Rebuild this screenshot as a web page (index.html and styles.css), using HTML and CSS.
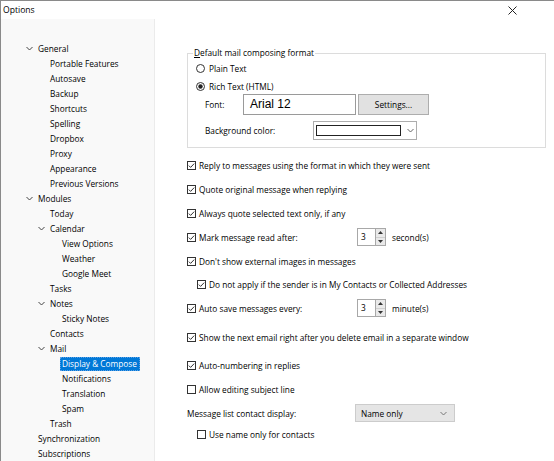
FILE: index.html
```html
<!DOCTYPE html>
<html>
<head>
<meta charset="utf-8">
<link rel="stylesheet" href="styles.css">
</head>
<body>
<div class="window">
  <div class="titlebar">
    <span class="title">Options</span>
    <svg class="close" width="9" height="9" viewBox="0 0 9 9"><path d="M0.5 0.5 L8.5 8.5 M8.5 0.5 L0.5 8.5" stroke="#222" stroke-width="1" fill="none"/></svg>
  </div>
  <div class="main">
    <div class="sidebar">
      <div class="node l0"><span class="tw"><svg width="12" height="15" viewBox="0 0 12 15"><polyline points="0.5,6 3.5,9 6.5,6" fill="none" stroke="#444"/></svg></span><span class="lbl">General</span></div>
      <div class="node l1"><span class="tw"></span><span class="lbl">Portable Features</span></div>
      <div class="node l1"><span class="tw"></span><span class="lbl">Autosave</span></div>
      <div class="node l1"><span class="tw"></span><span class="lbl">Backup</span></div>
      <div class="node l1"><span class="tw"></span><span class="lbl">Shortcuts</span></div>
      <div class="node l1"><span class="tw"></span><span class="lbl">Spelling</span></div>
      <div class="node l1"><span class="tw"></span><span class="lbl">Dropbox</span></div>
      <div class="node l1"><span class="tw"></span><span class="lbl">Proxy</span></div>
      <div class="node l1"><span class="tw"></span><span class="lbl">Appearance</span></div>
      <div class="node l1"><span class="tw"></span><span class="lbl">Previous Versions</span></div>
      <div class="node l0"><span class="tw"><svg width="12" height="15" viewBox="0 0 12 15"><polyline points="0.5,6 3.5,9 6.5,6" fill="none" stroke="#444"/></svg></span><span class="lbl">Modules</span></div>
      <div class="node l1"><span class="tw"></span><span class="lbl">Today</span></div>
      <div class="node l1"><span class="tw"><svg width="12" height="15" viewBox="0 0 12 15"><polyline points="0.5,6 3.5,9 6.5,6" fill="none" stroke="#444"/></svg></span><span class="lbl">Calendar</span></div>
      <div class="node l2"><span class="tw"></span><span class="lbl">View Options</span></div>
      <div class="node l2"><span class="tw"></span><span class="lbl">Weather</span></div>
      <div class="node l2"><span class="tw"></span><span class="lbl">Google Meet</span></div>
      <div class="node l1"><span class="tw"></span><span class="lbl">Tasks</span></div>
      <div class="node l1"><span class="tw"><svg width="12" height="15" viewBox="0 0 12 15"><polyline points="0.5,6 3.5,9 6.5,6" fill="none" stroke="#444"/></svg></span><span class="lbl">Notes</span></div>
      <div class="node l2"><span class="tw"></span><span class="lbl">Sticky Notes</span></div>
      <div class="node l1"><span class="tw"></span><span class="lbl">Contacts</span></div>
      <div class="node l1"><span class="tw"><svg width="12" height="15" viewBox="0 0 12 15"><polyline points="0.5,6 3.5,9 6.5,6" fill="none" stroke="#444"/></svg></span><span class="lbl">Mail</span></div>
      <div class="node l2"><span class="tw"></span><span class="lbl sel">Display &amp; Compose</span></div>
      <div class="node l2"><span class="tw"></span><span class="lbl">Notifications</span></div>
      <div class="node l2"><span class="tw"></span><span class="lbl">Translation</span></div>
      <div class="node l2"><span class="tw"></span><span class="lbl">Spam</span></div>
      <div class="node l1"><span class="tw"></span><span class="lbl">Trash</span></div>
      <div class="node l0"><span class="tw"></span><span class="lbl">Synchronization</span></div>
      <div class="node l0"><span class="tw"></span><span class="lbl">Subscriptions</span></div>
    </div>
    <div class="content">
      <fieldset class="group">
        <legend><u>D</u>efault mail composing format</legend>
        <div class="radio-row">
          <svg class="radio" width="9" height="9" viewBox="0 0 9 9"><circle cx="4.5" cy="4.5" r="4" fill="#fff" stroke="#333"/></svg>
          <span>Plain Text</span>
        </div>
        <div class="radio-row second">
          <svg class="radio" width="9" height="9" viewBox="0 0 9 9"><circle cx="4.5" cy="4.5" r="4" fill="#fff" stroke="#333"/><circle cx="4.5" cy="4.5" r="2.2" fill="#222"/></svg>
          <span>Rich Text (HTML)</span>
        </div>
        <div class="font-row">
          <span class="font-label">Font:</span>
          <div class="fontbox">Arial 12</div>
          <div class="button">Settings...</div>
        </div>
        <div class="bg-row">
          <span class="bg-label">Background color:</span>
          <div class="colorcombo">
            <div class="swatch"></div>
            <svg class="chev" width="7" height="5" viewBox="0 0 7 5"><polyline points="0.5,1 3.5,4 6.5,1" fill="none" stroke="#666"/></svg>
          </div>
        </div>
      </fieldset>

      <div class="options">
        <div class="opt">
          <svg class="cb" width="9" height="9" viewBox="0 0 9 9"><rect x="0.5" y="0.5" width="8" height="8" fill="#fff" stroke="#333"/><polyline points="1.8,4.6 3.6,6.4 7.2,2.6" fill="none" stroke="#333"/></svg>
          <span>Reply to messages using the format in which they were sent</span>
        </div>
        <div class="opt">
          <svg class="cb" width="9" height="9" viewBox="0 0 9 9"><rect x="0.5" y="0.5" width="8" height="8" fill="#fff" stroke="#333"/><polyline points="1.8,4.6 3.6,6.4 7.2,2.6" fill="none" stroke="#333"/></svg>
          <span>Quote original message when replying</span>
        </div>
        <div class="opt">
          <svg class="cb" width="9" height="9" viewBox="0 0 9 9"><rect x="0.5" y="0.5" width="8" height="8" fill="#fff" stroke="#333"/><polyline points="1.8,4.6 3.6,6.4 7.2,2.6" fill="none" stroke="#333"/></svg>
          <span>Always quote selected text only, if any</span>
        </div>
        <div class="opt">
          <svg class="cb" width="9" height="9" viewBox="0 0 9 9"><rect x="0.5" y="0.5" width="8" height="8" fill="#fff" stroke="#333"/><polyline points="1.8,4.6 3.6,6.4 7.2,2.6" fill="none" stroke="#333"/></svg>
          <span class="fixed">Mark message read after:</span>
          <div class="spin">
            <div class="spin-val">3</div>
            <div class="spin-btns">
              <div class="spin-btn"><svg width="5" height="3" viewBox="0 0 5 3"><polygon points="0,3 2.5,0 5,3" fill="#333"/></svg></div>
              <div class="spin-btn"><svg width="5" height="3" viewBox="0 0 5 3"><polygon points="0,0 2.5,3 5,0" fill="#333"/></svg></div>
            </div>
          </div>
          <span class="unit">second(s)</span>
        </div>
        <div class="opt">
          <svg class="cb" width="9" height="9" viewBox="0 0 9 9"><rect x="0.5" y="0.5" width="8" height="8" fill="#fff" stroke="#333"/><polyline points="1.8,4.6 3.6,6.4 7.2,2.6" fill="none" stroke="#333"/></svg>
          <span>Don't show external images in messages</span>
        </div>
        <div class="opt sub m7">
          <svg class="cb" width="9" height="9" viewBox="0 0 9 9"><rect x="0.5" y="0.5" width="8" height="8" fill="#fff" stroke="#333"/><polyline points="1.8,4.6 3.6,6.4 7.2,2.6" fill="none" stroke="#333"/></svg>
          <span>Do not apply if the sender is in My Contacts or Collected Addresses</span>
        </div>
        <div class="opt">
          <svg class="cb" width="9" height="9" viewBox="0 0 9 9"><rect x="0.5" y="0.5" width="8" height="8" fill="#fff" stroke="#333"/><polyline points="1.8,4.6 3.6,6.4 7.2,2.6" fill="none" stroke="#333"/></svg>
          <span class="fixed">Auto save messages every:</span>
          <div class="spin">
            <div class="spin-val">3</div>
            <div class="spin-btns">
              <div class="spin-btn"><svg width="5" height="3" viewBox="0 0 5 3"><polygon points="0,3 2.5,0 5,3" fill="#333"/></svg></div>
              <div class="spin-btn"><svg width="5" height="3" viewBox="0 0 5 3"><polygon points="0,0 2.5,3 5,0" fill="#333"/></svg></div>
            </div>
          </div>
          <span class="unit">minute(s)</span>
        </div>
        <div class="opt m13">
          <svg class="cb" width="9" height="9" viewBox="0 0 9 9"><rect x="0.5" y="0.5" width="8" height="8" fill="#fff" stroke="#333"/><polyline points="1.8,4.6 3.6,6.4 7.2,2.6" fill="none" stroke="#333"/></svg>
          <span>Show the next email right after you delete email in a separate window</span>
        </div>
        <div class="opt m12">
          <svg class="cb" width="9" height="9" viewBox="0 0 9 9"><rect x="0.5" y="0.5" width="8" height="8" fill="#fff" stroke="#333"/><polyline points="1.8,4.6 3.6,6.4 7.2,2.6" fill="none" stroke="#333"/></svg>
          <span>Auto-numbering in replies</span>
        </div>
        <div class="opt">
          <svg class="cb" width="9" height="9" viewBox="0 0 9 9"><rect x="0.5" y="0.5" width="8" height="8" fill="#fff" stroke="#333"/></svg>
          <span>Allow editing subject line</span>
        </div>
        <div class="opt">
          <span class="list-label">Message list contact display:</span>
          <div class="dropdown">
            <span>Name only</span>
            <svg width="7" height="5" viewBox="0 0 7 5"><polyline points="0.5,1 3.5,4 6.5,1" fill="none" stroke="#777"/></svg>
          </div>
        </div>
        <div class="opt sub m5">
          <svg class="cb" width="9" height="9" viewBox="0 0 9 9"><rect x="0.5" y="0.5" width="8" height="8" fill="#fff" stroke="#333"/></svg>
          <span>Use name only for contacts</span>
        </div>
      </div>
    </div>
  </div>
</div>
</body>
</html>
```

FILE: styles.css
```css
* { box-sizing: border-box; }
html, body { margin: 0; padding: 0; background: #fff; }
body {
  font-family: "Open Sans", "Noto Sans", "Liberation Sans", sans-serif;
  font-size: 8.3px;
  color: #000;
}
.window {
  width: 554px;
  height: 461px;
  border-top: 1px solid #8a8a8a;
  border-left: 1px solid #8a8a8a;
  display: flex;
  flex-direction: column;
  overflow: hidden;
}
.titlebar {
  height: 18px;
  flex: none;
  display: flex;
  align-items: center;
  justify-content: space-between;
  padding: 0 37px 0 2px;
  background: #fff;
}
.title { font-size: 8.6px; color: #000; }
.close { display: block; }
.main {
  flex: 1;
  display: flex;
  min-height: 0;
}
.sidebar {
  width: 154px;
  flex: none;
  background: #f9f9f9;
  border-right: 1px solid #ebebeb;
  padding-top: 22px;
}
.node {
  height: 15px;
  display: flex;
  align-items: center;
  white-space: nowrap;
}
.l0 { padding-left: 25px; }
.l1 { padding-left: 37px; }
.l2 { padding-left: 49px; }
.tw { width: 12px; height: 15px; flex: none; }
.tw svg { display: block; }
.lbl { line-height: 14px; }
.lbl.sel {
  background: #0078d7;
  color: #fff;
  margin-left: -2px;
  padding: 0 3px 0 2px;
  outline: 1px dotted #5aa0e6;
  outline-offset: -1px;
}
.content {
  flex: 1;
  padding: 28px 8px 0 32px;
  background: #fff;
}
.group {
  margin: 0;
  border: 1px solid #dcdcdc;
  padding: 0 8px 7px 5px;
  min-width: 0;
}
.group legend {
  padding: 0 1px;
  line-height: 12px;
}
.radio-row {
  height: 16px;
  display: flex;
  align-items: center;
  padding-left: 3px;
  margin-top: 1px;
}
.radio-row.second { margin-top: 2px; }
.radio { display: block; margin-right: 4px; flex: none; }
.font-row {
  height: 21px;
  display: flex;
  align-items: center;
  padding-left: 12px;
}
.font-label { width: 38px; flex: none; }
.fontbox {
  width: 113px;
  height: 21px;
  border: 1px solid #9a9a9a;
  background: #fff;
  font-family: "Liberation Sans", Arial, sans-serif;
  font-size: 12px;
  color: #000;
  padding-left: 6px;
  line-height: 19px;
}
.button {
  width: 71px;
  height: 21px;
  margin-left: 2px;
  border: 1px solid #adadad;
  background: #e1e1e1;
  text-align: center;
  line-height: 19px;
}
.bg-row {
  height: 19px;
  margin-top: 6px;
  display: flex;
  align-items: center;
  padding-left: 12px;
}
.bg-label { width: 108px; flex: none; }
.colorcombo {
  width: 104px;
  height: 19px;
  border: 1px solid #adadad;
  background: #fff;
  display: flex;
  align-items: center;
  padding-left: 2px;
}
.swatch {
  width: 85px;
  height: 11px;
  border: 1px solid #222;
  background: #fff;
}
.colorcombo .chev { display: block; margin-left: 6px; }
.options { margin-top: 9px; }
.opt {
  height: 16px;
  display: flex;
  align-items: center;
  margin-top: 8px;
  white-space: nowrap;
}
.opt:first-child { margin-top: 0; }
.opt.sub { padding-left: 10px; }
.opt.m7 { margin-top: 7px; }
.opt.m13 { margin-top: 13px; }
.opt.m12 { margin-top: 12px; }
.opt.m5 { margin-top: 5px; }
.cb { display: block; flex: none; margin-right: 3px; }
.fixed { width: 158px; flex: none; }
.spin {
  display: flex;
  height: 18px;
  flex: none;
}
.spin-val {
  width: 18px;
  height: 18px;
  border: 1px solid #a8a8a8;
  border-right: none;
  background: #fff;
  padding-left: 3px;
  line-height: 16px;
}
.spin-btns {
  width: 11px;
  height: 18px;
  border: 1px solid #a8a8a8;
  display: flex;
  flex-direction: column;
}
.spin-btn {
  flex: 1;
  background: #e9e9e9;
  display: flex;
  align-items: center;
  justify-content: center;
}
.spin-btn + .spin-btn { border-top: 1px solid #cfcfcf; }
.spin-btn svg { display: block; }
.unit { margin-left: 6px; }
.list-label { width: 168px; flex: none; }
.dropdown {
  width: 100px;
  height: 18px;
  border: 1px solid #cccccc;
  background: #e5e5e5;
  display: flex;
  align-items: center;
  justify-content: space-between;
  padding: 0 7px 0 5px;
  color: #000;
}
.dropdown svg { display: block; }
```
